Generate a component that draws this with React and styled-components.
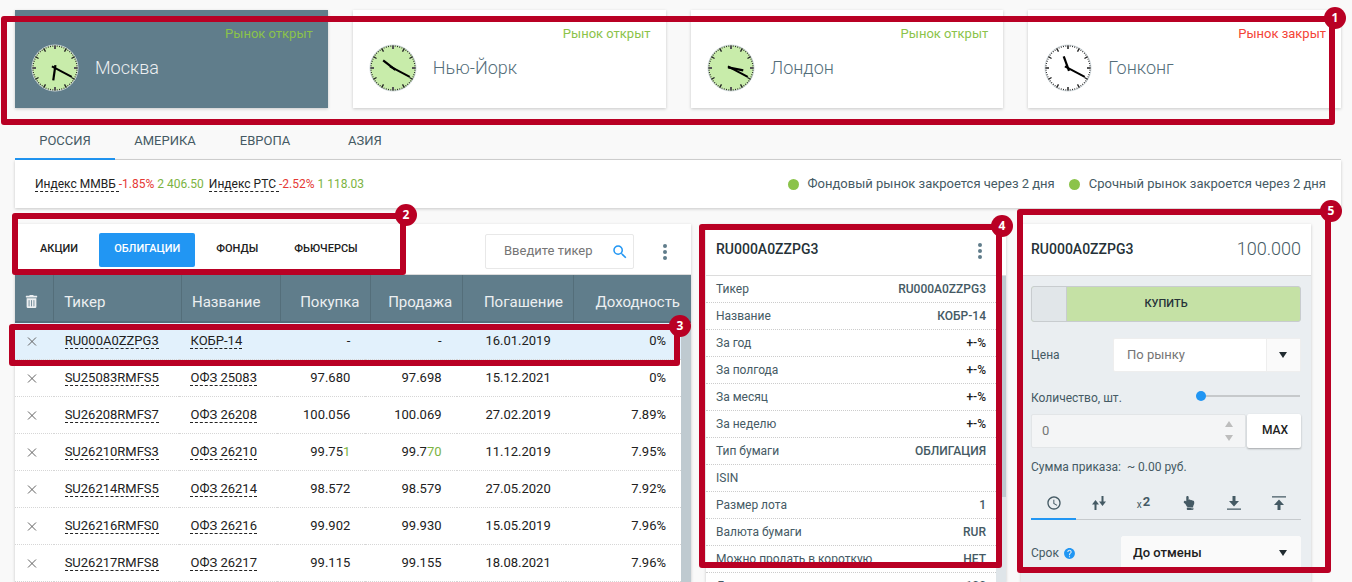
import { useState } from 'react';
import styled, { createGlobalStyle, css } from 'styled-components';
import { FaHandPointUp, FaTrashAlt } from 'react-icons/fa';
import { MdAccessTime, MdHelp, MdSearch } from 'react-icons/md';

const GlobalStyle = createGlobalStyle`
	*,
	*::before,
	*::after {
		box-sizing: border-box;
	}

	body {
		margin: 0;
		background: #f9f9f9;
		color: #455a64;
		font-family: Roboto, 'Liberation Sans', sans-serif;
		font-size: 13px;
		line-height: 16px;
	}

	button,
	input,
	select {
		margin: 0;
		padding: 0;
		border: 0;
		background: none;
		color: inherit;
		font: inherit;
	}

	button {
		cursor: pointer;
	}

	h2,
	ul,
	dl,
	dd {
		margin: 0;
		padding: 0;
	}
`;

const cardShadow = css`
	box-shadow: 0 1px 3px rgba(0, 0, 0, 0.2);
`;

const Page = styled.div`
	display: flex;
	flex-direction: column;
	height: 100vh;
	padding: 10px 11px 0 15px;
	overflow: hidden;
`;

/* ---------- numbered callouts ---------- */

const CalloutFrame = styled.div`
	position: absolute;
	z-index: 2;
	top: ${(p) => p.$top};
	right: ${(p) => p.$right};
	bottom: ${(p) => p.$bottom};
	left: ${(p) => p.$left};
	width: ${(p) => p.$width};
	height: ${(p) => p.$height};
	border: 6px solid #b90024;
	border-radius: 3px;
	pointer-events: none;
`;

const CalloutBadge = styled.span`
	position: absolute;
	top: -15px;
	right: -17px;
	width: 22px;
	height: 22px;
	border-radius: 50%;
	background: #b90024;
	color: #fff;
	font: 700 12px/22px 'Open Sans', sans-serif;
	text-align: center;
`;

const Callout = ({ number, top, right, bottom, left, width, height }) => (
	<CalloutFrame
		$top={top}
		$right={right}
		$bottom={bottom}
		$left={left}
		$width={width}
		$height={height}
	>
		<CalloutBadge>{number}</CalloutBadge>
	</CalloutFrame>
);

/* ---------- markets ---------- */

const MarketsShell = styled.section`
	position: relative;
	display: grid;
	grid-template-columns: repeat(4, 1fr);
	gap: 25px;
`;

const MarketCard = styled.article`
	display: grid;
	grid-template-columns: 48px 1fr;
	grid-template-rows: 16px 48px;
	column-gap: 16px;
	align-items: center;
	height: 98px;
	padding: 16px 15px 0 16px;
	background: ${(p) => (p.$active ? '#607d8b' : '#fff')};
	color: ${(p) => (p.$active ? '#eceff1' : '#546e7a')};
	${cardShadow}

	& svg {
		margin-top: 4px;
	}
`;

const MarketStatus = styled.span`
	grid-column: 1 / -1;
	justify-self: end;
	color: ${(p) => (p.$open ? '#8bc34a' : '#f44336')};
`;

const MarketName = styled.h2`
	margin-top: 4px;
	font-size: 18px;
	font-weight: 300;
	line-height: 24px;
`;

const MARKETS = [
	{ name: 'Москва', open: true, hour: 188 },
	{ name: 'Нью-Йорк', open: true, hour: 308 },
	{ name: 'Лондон', open: true, hour: 101 },
	{ name: 'Гонконг', open: false, hour: 340 },
];

const HOURS = Array.from({ length: 12 }, (_, i) => i * 30);

const Clock = ({ open, hour }) => (
	<svg width="48" height="48" viewBox="0 0 48 48" aria-hidden="true">
		<circle
			cx="24"
			cy="24"
			r="23"
			fill={open ? '#c8ecaa' : '#fff'}
			stroke="#cfd8dc"
		/>
		<circle
			cx="24"
			cy="24"
			r="22"
			fill="none"
			stroke="#222"
			strokeWidth="1.200"
			pathLength="60"
			strokeDasharray="0.4 0.6"
			strokeDashoffset="0.2"
		/>
		{HOURS.map((deg) => (
			<path
				key={deg}
				d="M24 1.500v3.500"
				stroke={deg % 90 ? '#222' : '#555'}
				strokeWidth={deg % 90 ? 1.4 : 2}
				transform={`rotate(${deg} 24 24)`}
			/>
		))}
		<path
			d="M24 27V11.500"
			stroke="#000"
			strokeWidth="2.200"
			transform={`rotate(${hour} 24 24)`}
		/>
		<path
			d="M24 27.500V5"
			stroke="#000"
			strokeWidth="1.900"
			transform="rotate(118 24 24)"
		/>
	</svg>
);

const Markets = () => (
	<MarketsShell>
		{MARKETS.map((market, i) => (
			<MarketCard key={market.name} $active={i === 0}>
				<MarketStatus $open={market.open}>
					{market.open ? 'Рынок открыт' : 'Рынок закрыт'}
				</MarketStatus>
				<Clock open={market.open} hour={market.hour} />
				<MarketName>{market.name}</MarketName>
			</MarketCard>
		))}
		<Callout number={1} top="6px" right="6px" bottom="-17px" left="-14px" />
	</MarketsShell>
);

/* ---------- regions and indexes ---------- */

const RegionTabs = styled.nav`
	display: flex;
	height: 38px;
	margin-top: 14px;
	border-bottom: 1px solid #d4d4d4;
`;

const RegionTab = styled.button`
	width: 100px;
	height: 38px;
	padding-top: 2px;
	border-bottom: 2px solid ${(p) => (p.$active ? '#2196f3' : 'transparent')};
	font-size: 13px;
	text-transform: uppercase;
`;

const IndexBar = styled.section`
	display: flex;
	flex-shrink: 0;
	align-items: center;
	justify-content: space-between;
	height: 48px;
	padding: 0 15px 0 20px;
	background: #fff;
	${cardShadow}
`;

const IndexList = styled.div`
	display: flex;
	gap: 5px;
	font-size: 12px;
`;

const Dashed = styled.a`
	border-bottom: 1px dashed #222;
	color: #212121;
	text-decoration: none;
	white-space: pre;
`;

const Down = styled.span`
	color: #e53935;
`;

const Up = styled.span`
	color: #7cb342;
`;

const SessionList = styled.ul`
	display: flex;
	gap: 14px;
	list-style: none;
`;

const Session = styled.li`
	display: flex;
	align-items: center;
	gap: 9px;

	&::before {
		content: '';
		width: 11px;
		height: 11px;
		border-radius: 50%;
		background: #8bc34a;
	}
`;

const REGIONS = ['Россия', 'Америка', 'Европа', 'Азия'];

const Regions = () => {
	const [region, setRegion] = useState('Россия');

	return (
		<>
			<RegionTabs>
				{REGIONS.map((name) => (
					<RegionTab
						key={name}
						$active={name === region}
						onClick={() => setRegion(name)}
					>
						{name}
					</RegionTab>
				))}
			</RegionTabs>
			<IndexBar>
				<IndexList>
					<span>
						<Dashed href="#mmvb">{'Индекс ММВБ '}</Dashed>
						<Down>-1.85%</Down> <Up>2 406.50</Up>
					</span>
					<span>
						<Dashed href="#rts">{'Индекс РТС '}</Dashed>
						<Down>-2.52%</Down> <Up>1 118.03</Up>
					</span>
				</IndexList>
				<SessionList>
					<Session>Фондовый рынок закроется через 2 дня</Session>
					<Session>Срочный рынок закроется через 2 дня</Session>
				</SessionList>
			</IndexBar>
		</>
	);
};

/* ---------- shared panel parts ---------- */

const Workspace = styled.main`
	display: grid;
	flex: 1;
	grid-template-columns: 676fr 300fr 290fr;
	gap: 15px;
	min-height: 0;
	margin-top: 16px;
	padding-right: 30px;
`;

const Panel = styled.section`
	position: relative;
	display: flex;
	flex-direction: column;
	min-width: 0;
	min-height: 0;
	background: ${(p) => p.$background || '#fff'};
	${cardShadow}
`;

const PanelHead = styled.header`
	display: flex;
	flex-shrink: 0;
	align-items: center;
	justify-content: space-between;
	height: 52px;
	padding: 0 ${(p) => (p.$menu ? '20px' : '10px')} 2px 10px;
	border-bottom: 1px solid #dcdcdc;
	background: #fff;
`;

const PanelTitle = styled.h2`
	color: #263238;
	font-size: 14px;
	font-weight: 500;
	line-height: 20px;
`;

const ScrollBody = styled.div`
	display: flex;
	flex: 1;
	min-height: 0;
	overflow: hidden;
`;

const ScrollContent = styled.div`
	flex: 1;
	min-width: 0;
`;

const ScrollTrack = styled.div`
	flex: 0 0 10px;
	background: #dfe5e9;
`;

const ScrollThumb = styled.div`
	height: ${(p) => p.$height};
	background: #bfcad0;
`;

const KebabButton = styled.button`
	display: grid;
	place-items: center;
	width: 12px;
	height: 24px;
	margin-top: 4px;
	color: #607d8b;
`;

const Kebab = () => (
	<KebabButton aria-label="Меню">
		<svg width="4" height="16" viewBox="0 0 4 16" fill="currentColor">
			<circle cx="2" cy="2" r="2" />
			<circle cx="2" cy="8" r="2" />
			<circle cx="2" cy="14" r="2" />
		</svg>
	</KebabButton>
);

/* ---------- quotes ---------- */

const QuotesHead = styled.header`
	display: flex;
	flex-shrink: 0;
	align-items: center;
	height: 51px;
	padding: 2px 20px 0 10px;
	border-bottom: 1px solid #dcdcdc;
`;

const TypeTabs = styled.nav`
	display: flex;
	flex: 1;
	gap: 6px;
`;

const TypeTab = styled.button`
	height: 34px;
	padding: 0 15px 2px;
	border-radius: 2px;
	background: ${(p) => (p.$active ? '#2196f3' : 'transparent')};
	color: ${(p) => (p.$active ? '#fff' : '#212121')};
	font-size: 11px;
	font-weight: 500;
	text-transform: uppercase;
`;

const SearchBox = styled.label`
	display: flex;
	align-items: center;
	width: 149px;
	height: 35px;
	margin: 2px 25px 0 0;
	padding: 0 4px 0 18px;
	border: 1px solid #e8e8e8;
	border-radius: 2px;

	& input {
		flex: 1;
		min-width: 0;
		outline: none;
	}

	& input::placeholder {
		color: #757575;
	}

	& svg {
		margin-top: 2px;
		color: #2196f3;
	}
`;

const QuotesTable = styled.table`
	width: 100%;
	border-collapse: separate;
	border-spacing: 0;
	table-layout: fixed;

	& th {
		height: 48px;
		padding: 7px 10px 0;
		border-right: 1px solid #546e7a;
		border-bottom: 2px solid #546e7a;
		background: #607d8b;
		color: #eceff1;
		font-size: 15px;
		font-weight: 400;
		text-align: right;
	}

	& th:last-child {
		padding-right: 11px;
		border-right: 0;
	}

	& td {
		height: 37px;
		padding: 0 15px 0 11px;
		border-bottom: 1px dotted #d6d6d6;
		color: #212121;
		text-align: right;
	}

	& th:nth-child(-n + 3),
	& td:nth-child(-n + 3) {
		text-align: left;
	}
`;

const QuoteRow = styled.tr`
	background: ${(p) => (p.$selected ? '#e2f1fc' : '#fff')};
`;

const IconButton = styled.button`
	display: block;
	height: 16px;
	color: ${(p) => p.$color};

	& svg {
		display: block;
	}
`;

const COLUMNS = [
	['delete', '5.8%'],
	['Тикер', '18.9%'],
	['Название', '14.7%'],
	['Покупка', '13.2%'],
	['Продажа', '13.7%'],
	['Погашение', '16.4%'],
	['Доходность', '17.3%'],
];

const QUOTES = [
	['RU000A0ZZPG3', 'КОБР-14', '-', '-', '16.01.2019', '0%'],
	['SU25083RMFS5', 'ОФЗ 25083', '97.680', '97.698', '15.12.2021', '0%'],
	['SU26208RMFS7', 'ОФЗ 26208', '100.056', '100.069', '27.02.2019', '7.89%'],
	['SU26210RMFS3', 'ОФЗ 26210', '99.75|1', '99.7|70', '11.12.2019', '7.95%'],
	['SU26214RMFS5', 'ОФЗ 26214', '98.572', '98.579', '27.05.2020', '7.92%'],
	['SU26216RMFS0', 'ОФЗ 26216', '99.902', '99.930', '15.05.2019', '7.96%'],
	['SU26217RMFS8', 'ОФЗ 26217', '99.115', '99.155', '18.08.2021', '7.96%'],
];

const TYPES = ['Акции', 'Облигации', 'Фонды', 'Фьючерсы'];

const Columns = () => (
	<colgroup>
		{COLUMNS.map(([name, width]) => (
			<col key={name} style={{ width }} />
		))}
	</colgroup>
);

// digits after the bar have just moved up
const Price = ({ value }) => {
	const [base, moved] = value.split('|');

	return (
		<>
			{base}
			{moved && <Up>{moved}</Up>}
		</>
	);
};

const Quotes = () => {
	const [type, setType] = useState('Облигации');

	return (
		<Panel>
			<QuotesHead>
				<TypeTabs>
					{TYPES.map((name) => (
						<TypeTab
							key={name}
							$active={name === type}
							onClick={() => setType(name)}
						>
							{name}
						</TypeTab>
					))}
				</TypeTabs>
				<SearchBox>
					<input
						type="text"
						placeholder="Введите тикер"
						aria-label="Введите тикер"
					/>
					<MdSearch size={18} />
				</SearchBox>
				<Kebab />
			</QuotesHead>
			<QuotesTable>
				<Columns />
				<thead>
					<tr>
						<th scope="col">
							<IconButton $color="#eceff1" aria-label="Удалить все">
								<FaTrashAlt size={13} />
							</IconButton>
						</th>
						{COLUMNS.slice(1).map(([name]) => (
							<th key={name} scope="col">
								{name}
							</th>
						))}
					</tr>
				</thead>
			</QuotesTable>
			<ScrollBody>
				<ScrollContent>
					<QuotesTable>
						<Columns />
						<tbody>
							{QUOTES.map((row, i) => (
								<QuoteRow key={row[0]} $selected={i === 0}>
									<td>
										<IconButton $color="#616161" aria-label="Удалить">
											<svg width="12" height="16" viewBox="0 0 12 16">
												<path
													d="M2 4.500l8 8m0-8l-8 8"
													stroke="currentColor"
												/>
											</svg>
										</IconButton>
									</td>
									<td>
										<Dashed href={`#${row[0]}`}>{row[0]}</Dashed>
									</td>
									<td>
										<Dashed href={`#${row[0]}`}>{row[1]}</Dashed>
									</td>
									<td>
										<Price value={row[2]} />
									</td>
									<td>
										<Price value={row[3]} />
									</td>
									<td>{row[4]}</td>
									<td>{row[5]}</td>
								</QuoteRow>
							))}
						</tbody>
					</QuotesTable>
				</ScrollContent>
				<ScrollTrack>
					<ScrollThumb $height="100%" />
				</ScrollTrack>
			</ScrollBody>
			<Callout number={2} top="-11px" left="-3px" width="394px" height="62px" />
			<Callout number={3} top="100px" left="-6px" right="11px" height="42px" />
		</Panel>
	);
};

/* ---------- instrument ---------- */

const FactRow = styled.div`
	display: flex;
	align-items: center;
	justify-content: space-between;
	height: 27px;
	padding: 0 10px;
	border-bottom: 1px dotted #ccc;
	font-size: 12px;

	& dd {
		color: ${(p) => (p.$dark ? '#212121' : '#455a64')};
		font-weight: 500;
	}
`;

const FACTS = [
	['Тикер', 'RU000A0ZZPG3'],
	['Название', 'КОБР-14'],
	['За год', '+-%'],
	['За полгода', '+-%'],
	['За месяц', '+-%'],
	['За неделю', '+-%'],
	['Тип бумаги', 'ОБЛИГАЦИЯ'],
	['ISIN', ''],
	['Размер лота', '1'],
	['Валюта бумаги', 'RUR'],
	['Можно продать в короткую', 'НЕТ'],
	['Дисконт', '100'],
];

const Instrument = () => (
	<Panel>
		<PanelHead $menu>
			<PanelTitle>RU000A0ZZPG3</PanelTitle>
			<Kebab />
		</PanelHead>
		<ScrollBody>
			<ScrollContent as="dl">
				{FACTS.map(([label, value]) => (
					<FactRow key={label} $dark={value === '+-%'}>
						<dt>{label}</dt>
						<dd>{value}</dd>
					</FactRow>
				))}
			</ScrollContent>
			<ScrollTrack>
				<ScrollThumb $height="221px" />
			</ScrollTrack>
		</ScrollBody>
		<Callout number={4} top="0" left="-7px" right="4px" height="344px" />
	</Panel>
);

/* ---------- order ---------- */

const OrderPrice = styled.span`
	color: #455a64;
	font-size: 18px;
	font-weight: 300;
	line-height: 24px;
`;

const OrderForm = styled.form`
	display: flex;
	flex-direction: column;
	padding: 10px;
	font-size: 12px;
`;

const BuyButton = styled.button`
	position: relative;
	height: 36px;
	border: 1px solid #c8cccf;
	border-radius: 3px;
	background: #c5e1a5;
	color: #263238;
	font-size: 11px;
	font-weight: 500;
	text-transform: uppercase;

	&::before {
		content: '';
		position: absolute;
		top: 0;
		bottom: 0;
		left: 0;
		width: 35px;
		border-right: 1px solid #c8cccf;
		border-radius: 2px 0 0 2px;
		background: #e1e6e9;
	}
`;

const Field = styled.div`
	display: flex;
	align-items: center;
	justify-content: space-between;
	height: ${(p) => p.$height || '34px'};
	margin-top: ${(p) => p.$space || '16px'};
`;

const FieldLabel = styled.label`
	display: flex;
	align-items: center;
	gap: 4px;

	& svg {
		color: #2196f3;
	}
`;

const SelectShell = styled.div`
	position: relative;
	width: ${(p) => p.$width};
	height: 34px;
	border: 1px solid ${(p) => (p.$strong ? '#fafafa' : '#eee')};
	border-radius: 2px;
	background: ${(p) => (p.$strong ? '#fafafa' : '#fff')};

	& select {
		appearance: none;
		width: 100%;
		height: 100%;
		padding: 0 44px 0 ${(p) => (p.$strong ? '11px' : '13px')};
		outline: none;
		color: ${(p) => (p.$strong ? '#212121' : '#757575')};
		font-size: 13px;
		font-weight: ${(p) => (p.$strong ? 500 : 400)};
	}
`;

const CaretBox = styled.span`
	position: absolute;
	top: 0;
	right: 0;
	bottom: 0;
	display: grid;
	place-items: center;
	width: 34px;
	padding-right: 2px;
	border-left: 1px solid ${(p) => (p.$strong ? '#fafafa' : '#eee')};
	background: #fafafa;
	color: #212b30;
	pointer-events: none;
`;

const Slider = styled.input`
	appearance: none;
	width: 104px;
	height: 12px;
	margin: 0 1px 4px 0;
	background: linear-gradient(#c6c9cb, #c6c9cb) center / 100% 2px no-repeat;

	&::-webkit-slider-thumb {
		appearance: none;
		width: 10px;
		height: 10px;
		border-radius: 50%;
		background: #2196f3;
	}
`;

const AmountRow = styled.div`
	display: flex;
	gap: 1px;
	height: 34px;
	margin-top: 8px;
`;

const AmountBox = styled.div`
	display: flex;
	flex: 1;
	align-items: center;
	padding: 0 12px 0 10px;
	border: 1px solid #e2e5e7;
	border-radius: 2px;
	background: #f4f5f6;
	color: #bdbdbd;

	& input {
		flex: 1;
		min-width: 0;
		outline: none;
		color: #757575;
		font-size: 13px;
	}
`;

const MaxButton = styled.button`
	width: 54px;
	padding: 0 0 2px 2px;
	border-radius: 2px;
	background: #fff;
	box-shadow: 0 1px 2px rgba(0, 0, 0, 0.3);
	color: #212121;
	font-size: 12px;
	font-weight: 500;
`;

const OrderSum = styled.p`
	margin: 11px 0 0;
	white-space: pre;
`;

const OrderTabs = styled.div`
	display: grid;
	grid-template-columns: repeat(6, 1fr);
	height: 36px;
	margin-top: 9px;
	border-bottom: 1px solid #c6cacd;
`;

const OrderTab = styled.button`
	display: grid;
	place-items: center;
	height: 36px;
	padding-top: 3px;
	border-bottom: 2px solid ${(p) => (p.$active ? '#2196f3' : 'transparent')};
	color: #455a64;
`;

const Doubling = styled.span`
	font-size: 13px;
	font-weight: 700;
	line-height: 16px;

	& small {
		position: relative;
		top: 2px;
		margin-right: 1px;
		font-size: 10px;
		font-weight: 400;
	}
`;

const Caret = () => (
	<svg width="8" height="6" viewBox="0 0 8 6" fill="currentColor">
		<path d="M0 0h8L4 6z" />
	</svg>
);

const Steppers = () => (
	<svg width="8" height="20" viewBox="0 0 8 20" fill="currentColor">
		<path d="M0 6h8L4 0zM0 14h8L4 20z" />
	</svg>
);

const SwapArrows = () => (
	<svg width="14" height="14" viewBox="0 0 14 14" fill="currentColor">
		<path d="M3.500 4L0 8.500h2.500V14h2V8.500H7zM9.500 0v5.500H7l3.500 4.500L14 5.500h-2.500V0z" />
	</svg>
);

const ArrowToLine = ({ up }) => (
	<svg width="14" height="14" viewBox="0 0 14 14" fill="currentColor">
		<path
			d="M5.500 0v5H2l5 5.500L12 5H8.500V0zM0 12.500h14v1.200H0z"
			transform={up ? 'rotate(180 7 7)' : undefined}
		/>
	</svg>
);

const ORDER_TABS = [
	['Срок', <MdAccessTime size={16} />],
	['Стоп', <SwapArrows />],
	[
		'Удвоить',
		<Doubling>
			<small>x</small>2
		</Doubling>,
	],
	['Вручную', <FaHandPointUp size={14} />],
	['Минимум', <ArrowToLine />],
	['Максимум', <ArrowToLine up />],
];

const Order = () => {
	const [tab, setTab] = useState('Срок');
	const [amount, setAmount] = useState('0');

	return (
		<Panel $background="#eaeef1">
			<PanelHead>
				<PanelTitle>RU000A0ZZPG3</PanelTitle>
				<OrderPrice>100.000</OrderPrice>
			</PanelHead>
			<OrderForm onSubmit={(e) => e.preventDefault()}>
				<BuyButton type="submit">Купить</BuyButton>
				<Field>
					<FieldLabel htmlFor="price">Цена</FieldLabel>
					<SelectShell $width="188px">
						<select id="price">
							<option>По рынку</option>
						</select>
						<CaretBox>
							<Caret />
						</CaretBox>
					</SelectShell>
				</Field>
				<Field $height="16px" $space="18px">
					<FieldLabel htmlFor="amount">Количество, шт.</FieldLabel>
					<Slider
						type="range"
						min="0"
						max="100"
						value={amount}
						aria-label="Количество"
						onChange={(e) => setAmount(e.target.value)}
					/>
				</Field>
				<AmountRow>
					<AmountBox>
						<input
							id="amount"
							type="text"
							value={amount}
							onChange={(e) => setAmount(e.target.value)}
						/>
						<Steppers />
					</AmountBox>
					<MaxButton type="button">MAX</MaxButton>
				</AmountRow>
				<OrderSum>{'Сумма приказа:  ~ 0.00 руб.'}</OrderSum>
				<OrderTabs>
					{ORDER_TABS.map(([name, icon]) => (
						<OrderTab
							key={name}
							type="button"
							aria-label={name}
							$active={name === tab}
							onClick={() => setTab(name)}
						>
							{icon}
						</OrderTab>
					))}
				</OrderTabs>
				<Field>
					<FieldLabel htmlFor="term">
						Срок <MdHelp size={13} />
					</FieldLabel>
					<SelectShell $width="180px" $strong>
						<select id="term">
							<option>До отмены</option>
						</select>
						<CaretBox $strong>
							<Caret />
						</CaretBox>
					</SelectShell>
				</Field>
			</OrderForm>
			<Callout number={5} top="-15px" left="-4px" right="-20px" height="364px" />
		</Panel>
	);
};

const App = () => (
	<>
		<GlobalStyle />
		<Page>
			<Markets />
			<Regions />
			<Workspace>
				<Quotes />
				<Instrument />
				<Order />
			</Workspace>
		</Page>
	</>
);

export default App;
